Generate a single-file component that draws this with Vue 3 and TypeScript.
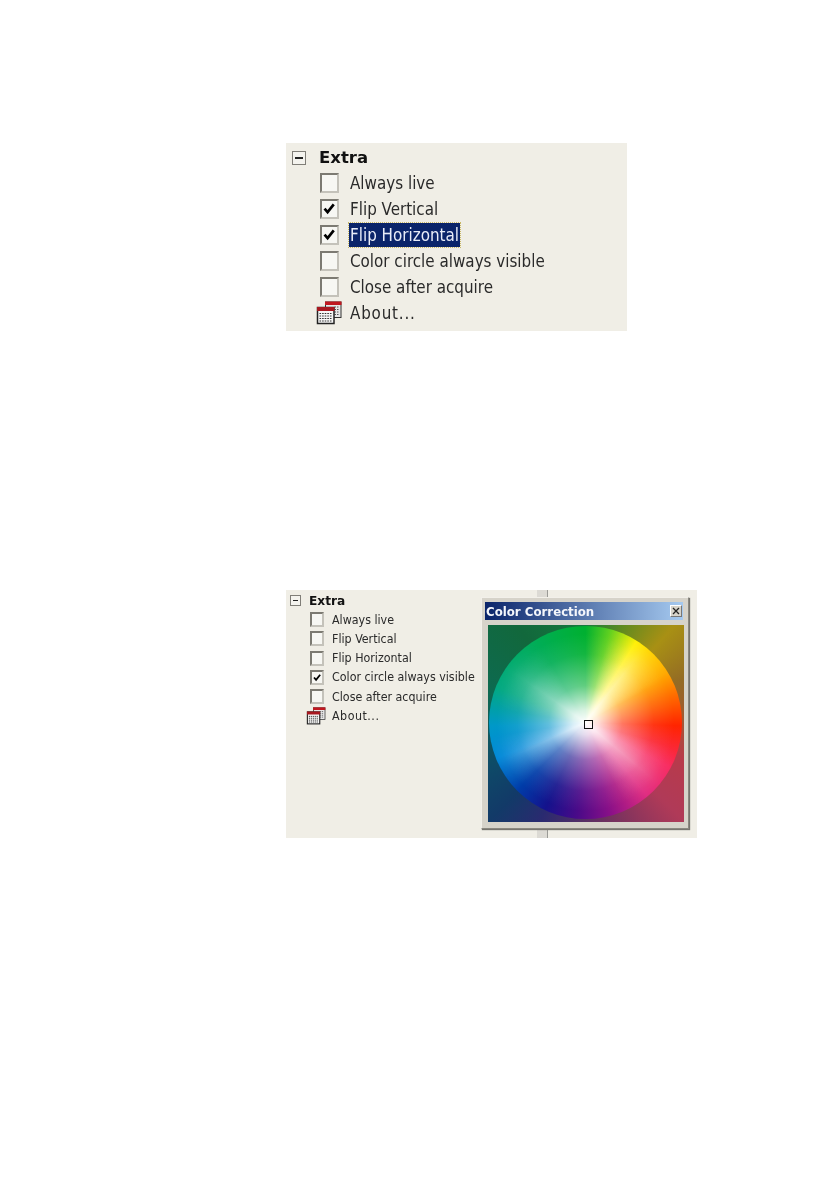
<script setup lang="ts">
interface Row { label: string; checked: boolean; selected?: boolean }
const firstRows: Row[] = [
  { label: 'Always live', checked: false },
  { label: 'Flip Vertical', checked: true },
  { label: 'Flip Horizontal', checked: true, selected: true },
  { label: 'Color circle always visible', checked: false },
  { label: 'Close after acquire', checked: false },
]
const secondRows: Row[] = [
  { label: 'Always live', checked: false },
  { label: 'Flip Vertical', checked: false },
  { label: 'Flip Horizontal', checked: false },
  { label: 'Color circle always visible', checked: true },
  { label: 'Close after acquire', checked: false },
]
const panels = [
  { cls: 'large', rows: firstRows },
  { cls: 'small', rows: secondRows },
]
</script>

<template>
  <div class="page">
    <section v-for="p in panels" :key="p.cls" class="panel" :class="p.cls">
      <div class="row head">
        <span class="minus"><i></i></span>
        <strong class="title">Extra</strong>
      </div>
      <div v-for="r in p.rows" :key="r.label" class="row item">
        <span class="check">
          <svg v-if="r.checked" viewBox="0 0 12 12" class="tick"><path d="M1.500 6 L4.500 9.500 L10.500 2" fill="none" stroke="#000" stroke-width="2.600" /></svg>
        </span>
        <span class="label" :class="{ selected: r.selected }">{{ r.label }}</span>
      </div>
      <div class="row item about">
        <svg class="cal" viewBox="0 0 26 24">
          <rect x="9.500" y="1" width="15.500" height="15.500" fill="#e8e8e8" stroke="#333" />
          <rect x="9" y="0.500" width="16.500" height="3.500" fill="#c01820" />
          <path d="M18.500 6h5M18.500 8.500h5M18.500 11h5M18.500 13.500h5" stroke="#555" stroke-dasharray="1.500 1" />
          <rect x="1.500" y="6.500" width="16.500" height="16" fill="#f6f6f6" stroke="#222" stroke-width="1.500" />
          <rect x="1" y="6" width="17.500" height="4" fill="#a81820" />
          <path d="M3.500 12.500h13M3.500 15h13M3.500 17.500h13M3.500 20h13" stroke="#333" stroke-width="1.200" stroke-dasharray="1.600 1" />
        </svg>
        <span class="label dots">About...</span>
      </div>

      <template v-if="p.cls === 'small'">
        <div class="stripe"></div>
        <div class="window">
          <div class="caption">
            <span>Color Correction</span>
            <span class="close">
              <svg viewBox="0 0 10 10"><path d="M2 2 L8 8 M8 2 L2 8" stroke="#222" stroke-width="1.300" /></svg>
            </span>
          </div>
          <div class="canvas">
            <div class="wheel"></div>
            <div class="rays"></div>
            <div class="glow"></div>
            <div class="marker"></div>
          </div>
        </div>
      </template>
    </section>
  </div>
</template>

<style scoped>
.page {
  width: 838px;
  height: 1190px;
  background: #fff;
  padding: 143px 0 0 286px;
  box-sizing: border-box;
  overflow: hidden;
  font-family: "DejaVu Sans", sans-serif;
  font-stretch: condensed;
  color: #2a2a2a;
}
.panel {
  position: relative;
  background: #f0eee6;
  filter: blur(0.5px);
  box-sizing: border-box;
}
.row {
  display: flex;
  align-items: center;
}
.minus {
  box-sizing: border-box;
  border: 1.500px solid #807e78;
  background: #f4f3ee;
  display: flex;
  align-items: center;
  justify-content: center;
  flex: none;
}
.minus i {
  display: block;
  background: #222;
  height: 1.200px;
  width: 60%;
}
.title {
  color: #111;
  font-weight: 700;
}
.check {
  box-sizing: border-box;
  flex: none;
  background: #f7f7f3;
  border-style: solid;
  border-color: #7c7a72 #c4c2ba #c4c2ba #7c7a72;
  display: flex;
  align-items: center;
  justify-content: center;
}
.tick {
  width: 82%;
  height: 82%;
}
.label {
  white-space: nowrap;
}
.selected {
  background: #0a246a;
  color: #e8ecf8;
  outline: 1px dotted #c9b866;
}
.cal {
  flex: none;
}

.large {
  width: 341px;
  height: 188px;
  padding: 1px 0 0 6px;
  margin-bottom: 259px;
}
.large .row {
  height: 26px;
}
.large .minus {
  width: 14px;
  height: 14px;
  margin-right: 13px;
  position: relative;
  top: 1px;
}
.large .title {
  font-size: 16.500px;
  font-stretch: normal;
}
.large .item {
  padding-left: 28px;
  font-size: 16.850px;
}
.large .dots {
  letter-spacing: 0.8px;
}
.large .check {
  width: 19px;
  height: 20px;
  margin-right: 11px;
  border-width: 2.500px;
}
.large .cal {
  width: 26px;
  height: 24px;
  margin: 0 8px 0 -4px;
}
.large .selected {
  padding: 0 1px;
  margin-left: -1px;
  line-height: 24px;
}

.small {
  width: 411px;
  height: 248px;
  padding: 1px 0 0 4px;
}
.small .row {
  height: 19.2px;
}
.small .minus {
  width: 11px;
  height: 11px;
  margin-right: 8px;
}
.small .title {
  font-size: 12.200px;
  font-stretch: normal;
}
.small .item {
  padding-left: 20px;
  font-size: 12.350px;
}
.small .dots {
  letter-spacing: 0.5px;
}
.small .check {
  width: 14px;
  height: 15px;
  margin-right: 8px;
  border-width: 2px;
}
.small .cal {
  width: 20px;
  height: 18px;
  margin: 0 6px 0 -4px;
}

.stripe {
  position: absolute;
  left: 251px;
  top: 0;
  bottom: 0;
  width: 10px;
  background: #dcdad4;
  border-right: 1px solid #9a9a96;
}
.window {
  position: absolute;
  left: 195px;
  top: 7px;
  width: 208px;
  height: 232px;
  box-sizing: border-box;
  background: #d6d3ca;
  border: 1px solid;
  border-color: #f2f0ea #8a8880 #8a8880 #f2f0ea;
  box-shadow: 1px 1px 1px #77756f;
  padding: 4px 5px 0 3px;
}
.caption {
  height: 18px;
  background: linear-gradient(90deg, #0a246a, #a6caf0);
  color: #f4f6fb;
  font-weight: 700;
  font-size: 13.100px;
  font-stretch: condensed;
  display: flex;
  align-items: center;
  justify-content: space-between;
  padding: 0 1px 0 1px;
  box-sizing: border-box;
}
.close {
  width: 12px;
  height: 12px;
  background: #d6d3ca;
  border: 1px solid;
  border-color: #fff #777 #777 #fff;
  box-sizing: border-box;
  display: block;
}
.close svg {
  display: block;
}
.canvas {
  position: relative;
  width: 196px;
  height: 197px;
  margin: 5px 0 0 3px;
  overflow: hidden;
  background: conic-gradient(from 0deg,
    #167a3e 0deg, #5c8a20 20deg, #a89014 42deg, #946c24 65deg, #a05a30 85deg,
    #b83a4a 110deg, #b03a58 135deg, #6a3060 170deg, #2a2a70 205deg,
    #123a68 225deg, #0e4a68 245deg, #0d6a50 290deg, #12683c 325deg, #167a3e 360deg);
}
.wheel {
  position: absolute;
  left: 1px;
  top: 1px;
  width: 193px;
  height: 193px;
  border-radius: 50%;
  background: conic-gradient(from 0deg,
    #00b030 0deg, #60d020 15deg, #fff000 32deg, #ffaa00 58deg, #ff7000 72deg,
    #ff2400 92deg, #f82a60 118deg, #e02a80 140deg, #881088 165deg, #4a0a88 185deg,
    #14128c 205deg, #003ca8 225deg, #0088d8 248deg, #0098c8 268deg, #00a880 292deg,
    #00ac60 320deg, #00b030 360deg);
}
.rays {
  position: absolute;
  left: 1px;
  top: 1px;
  width: 193px;
  height: 193px;
  border-radius: 50%;
  background: conic-gradient(from 0deg,
    transparent 14deg, rgba(255, 255, 255, .55) 38deg, transparent 62deg,
    transparent 105deg, rgba(255, 255, 255, .4) 130deg, transparent 155deg,
    transparent 225deg, rgba(255, 255, 255, .3) 245deg, transparent 262deg,
    rgba(255, 255, 255, 0) 278deg, rgba(255, 255, 255, .3) 305deg, transparent 330deg);
  -webkit-mask-image: radial-gradient(circle, #000 15%, rgba(0, 0, 0, .7) 45%, transparent 72%);
  mask-image: radial-gradient(circle, #000 15%, rgba(0, 0, 0, .7) 45%, transparent 72%);
}
.glow {
  position: absolute;
  left: 1px;
  top: 1px;
  width: 193px;
  height: 193px;
  border-radius: 50%;
  background: radial-gradient(circle at 50% 50%, #fff 0, rgba(255, 255, 255, .85) 9%, rgba(255, 255, 255, .38) 27%, rgba(255, 255, 255, .08) 50%, transparent 65%);
}
.marker {
  position: absolute;
  left: 96px;
  top: 95px;
  width: 9px;
  height: 9px;
  box-sizing: border-box;
  border: 1.500px solid #111;
  background: transparent;
}
</style>

<style>
html, body {
  margin: 0;
  background: #fff;
}
</style>
